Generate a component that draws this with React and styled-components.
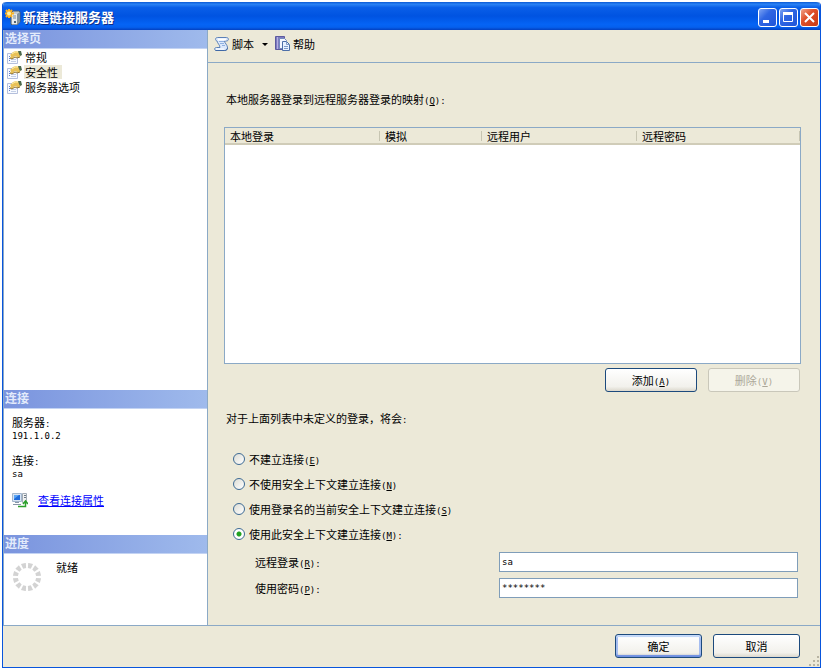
import React, { useState } from 'react';
import styled, { createGlobalStyle, ThemeProvider } from 'styled-components';

const theme = {
  face: '#ece9d8',
  line: '#8ba9c6',
  blue: '#0855dd',
  text: '#000000',
};

const pages = ['常规', '安全性', '服务器选项'];

const modes = [
  { id: 'none', label: '不建立连接', hotkey: 'E' },
  { id: 'nosec', label: '不使用安全上下文建立连接', hotkey: 'N' },
  { id: 'current', label: '使用登录名的当前安全上下文建立连接', hotkey: 'S' },
  { id: 'this', label: '使用此安全上下文建立连接', hotkey: 'M', tail: ':' },
];

function Hotkey({ letter, tail }) {
  return (
    <Latin>
      (<u>{letter}</u>){tail}
    </Latin>
  );
}

function ServerIcon() {
  return (
    <svg width='16' height='16' viewBox='0 0 16 16'>
      <path d='M6 4l2-2h6l1 1v10l-3 3H7l-1-1z' fill='#c4ccd2' stroke='#4d5f70' />
      <path d='M12 5l3-2v10l-3 3z' fill='#7f909e' />
      <path d='M7 5h5v10H7z' fill='#e6eaec' />
      <path d='M8 7h3M8 9h3' stroke='#7c8c9d' />
      <path d='M9 12h2v2H9z' fill='#4f6173' />
      <path d='M4 0v9M0 4.500h9M1 1l6 7M7 1L1 8' stroke='#ffb31f' strokeWidth='2' />
      <circle cx='4' cy='4.500' r='2' fill='#fff3a6' />
    </svg>
  );
}

function PageIcon() {
  return (
    <svg width='15' height='14' viewBox='0 0 15 14'>
      <path d='M.5 3.500h10v10H.5z' fill='#f7faff' stroke='#b4bfdc' />
      <path d='M2 6.500h1M2 8.500h1M2 10.500h1' stroke='#5f7dc9' />
      <path d='M4 9.500h5M4 11.500h5' stroke='#c4cfe6' />
      <path d='M3 5l3-3 3-1 3 1 2 2-1 3-3 0-2-1-3 3-2-1 1-2z' fill='#e8c157' />
      <path d='M5 4l3-2h3' stroke='#fff0a9' fill='none' />
      <path d='M3 8l2 1 3-2 2 1 3-1' stroke='#94742a' fill='none' />
      <path d='M11 1l3 0 1 4-2 1-1-2z' fill='#4c6a4d' />
    </svg>
  );
}

function ScriptIcon() {
  return (
    <svg width='16' height='16' viewBox='0 0 16 16'>
      <path
        d='M3.500 1.500h9c2.500 0 2.500 3.500 0 3.500h-2c0 2 3 4 3 6.500 0 2-1 3-3 3h-8c-2.500 0-2.500-3 0-3h3.500C6 9 3.500 7.500 3 5 1 4.500 1 1.500 3.500 1.500z'
        fill='#dbe8fb'
        stroke='#5b80b7'
      />
      <path d='M4 3.500h8' stroke='#ffffff' strokeWidth='2' />
      <path d='M5 5.500h5M6 7.500h4M8 9.500h3' stroke='#8fb0e0' fill='none' />
      <path d='M2 13h8' stroke='#ffffff' />
      <path d='M1.500 14.500h9c2 0 3-1 3-3' stroke='#3f68a6' fill='none' />
    </svg>
  );
}

function HelpIcon() {
  return (
    <svg width='16' height='16' viewBox='0 0 16 16'>
      <path d='M.5.500h9v13h-9z' fill='#7f7cc0' stroke='#5c5a9e' />
      <path d='M2.500 1v12' stroke='#b3b0e2' />
      <path d='M4.500 2.500h5l2 2v8h-7z' fill='#f3f7ff' stroke='#7389bd' />
      <path d='M7.500 5.500h4l3 3v6h-7z' fill='#e7f1ff' stroke='#4d6fa8' />
      <path d='M11.500 5.500v3h3M9 10.500h4M9 12.500h4' stroke='#7d9ac8' fill='none' />
    </svg>
  );
}

function ConnectionIcon() {
  return (
    <svg width='16' height='16' viewBox='0 0 16 16'>
      <path d='M10.500 1.500h4v9h-4z' fill='#f1f2f3' stroke='#a4adb6' />
      <path d='M12 3.500h2M12 5.500h2' stroke='#6c7883' />
      <path d='M.5 1.500h9v8h-9z' fill='#d7e4f4' stroke='#a3b6cc' />
      <path d='M2 3h6v5H2z' fill='#1f6cdb' />
      <path d='M2 3h5l-5 4z' fill='#5ba6f4' />
      <path d='M3 10.500h4M1 12.500h8' stroke='#8796a8' />
      <path d='M6 14.500h7.500V10M11 12l2.500-3 2.500 3' stroke='#2ca12c' fill='none' strokeWidth='1.500' />
    </svg>
  );
}

function Spinner() {
  const ticks = Array.from({ length: 12 }, (_, i) => i * 30);
  return (
    <svg width='28' height='28' viewBox='0 0 28 28'>
      {ticks.map((deg) => (
        <path key={deg} d='M11.500 0h5l-1 5h-3z' fill='#d3d3d3' transform={`rotate(${deg + 15} 14 14)`} />
      ))}
    </svg>
  );
}

function Grip() {
  return (
    <svg width='11' height='11' viewBox='0 0 11 11'>
      <path d='M8 0h2v2H8zM4 4h2v2H4zM8 4h2v2H8zM0 8h2v2H0zM4 8h2v2H4zM8 8h2v2H8z' fill='#b8b4a2' />
    </svg>
  );
}

function App() {
  const [page, setPage] = useState('安全性');
  const [mode, setMode] = useState('this');
  const [login, setLogin] = useState('sa');
  const [password, setPassword] = useState('********');

  return (
    <ThemeProvider theme={theme}>
      <GlobalStyle />
      <Window>
        <TitleBar>
          <ServerIcon />
          <Title>新建链接服务器</Title>
          <CaptionButton aria-label='最小化'>
            <svg width='17' height='17' viewBox='0 0 17 17'>
              <path d='M4 11h6v3H4z' fill='#fff' />
            </svg>
          </CaptionButton>
          <CaptionButton aria-label='最大化'>
            <svg width='17' height='17' viewBox='0 0 17 17'>
              <path d='M3.500 4.500h9v8h-9z' fill='none' stroke='#fff' />
              <path d='M3 3h10v3H3z' fill='#fff' />
            </svg>
          </CaptionButton>
          <CaptionButton $close aria-label='关闭'>
            <svg width='17' height='17' viewBox='0 0 17 17'>
              <path d='M4 4l9 9M13 4l-9 9' stroke='#fff' strokeWidth='2' />
            </svg>
          </CaptionButton>
        </TitleBar>

        <Body>
          <Sidebar>
            <SectionTitle>选择页</SectionTitle>
            <PageList>
              {pages.map((name) => (
                <PageRow key={name}>
                  <PageIcon />
                  <PageButton $active={name === page} onClick={() => setPage(name)}>
                    {name}
                  </PageButton>
                </PageRow>
              ))}
            </PageList>

            <SectionTitle>连接</SectionTitle>
            <Connection>
              <Info>
                <dt>
                  服务器<Latin>:</Latin>
                </dt>
                <dd>
                  <Latin>191.1.0.2</Latin>
                </dd>
              </Info>
              <Info>
                <dt>
                  连接<Latin>:</Latin>
                </dt>
                <dd>
                  <Latin>sa</Latin>
                </dd>
              </Info>
              <LinkRow>
                <ConnectionIcon />
                <a href='#properties'>查看连接属性</a>
              </LinkRow>
            </Connection>

            <SectionTitle>进度</SectionTitle>
            <Progress>
              <Spinner />
              <span>就绪</span>
            </Progress>
          </Sidebar>

          <Main>
            <Toolbar>
              <ToolButton>
                <ScriptIcon />
                脚本
                <Arrow />
              </ToolButton>
              <ToolButton>
                <HelpIcon />
                帮助
              </ToolButton>
            </Toolbar>

            <Content>
              <Caption id='mapping'>
                本地服务器登录到远程服务器登录的映射
                <Hotkey letter='Q' tail=':' />
              </Caption>
              <ListBox>
                <MappingTable aria-labelledby='mapping'>
                  <colgroup>
                    <Col $width={155} />
                    <Col $width={102} />
                    <Col $width={155} />
                    <col />
                  </colgroup>
                  <thead>
                    <tr>
                      <th>本地登录</th>
                      <th>模拟</th>
                      <th>远程用户</th>
                      <th>远程密码</th>
                    </tr>
                  </thead>
                  <tbody />
                </MappingTable>
              </ListBox>
              <ListActions>
                <Button $wide>
                  添加
                  <Hotkey letter='A' />
                </Button>
                <Button $wide disabled>
                  删除
                  <Hotkey letter='V' />
                </Button>
              </ListActions>

              <Modes>
                <legend>对于上面列表中未定义的登录，将会<Latin>:</Latin></legend>
                {modes.map((m) => (
                  <RadioLabel key={m.id}>
                    <Radio name='mode' checked={mode === m.id} onChange={() => setMode(m.id)} />
                    <span>
                      {m.label}
                      <Hotkey letter={m.hotkey} tail={m.tail} />
                    </span>
                  </RadioLabel>
                ))}
              </Modes>

              <Fields>
                <label htmlFor='login'>
                  远程登录
                  <Hotkey letter='R' tail=':' />
                </label>
                <TextBox id='login' value={login} onChange={(e) => setLogin(e.target.value)} />
                <label htmlFor='password'>
                  使用密码
                  <Hotkey letter='P' tail=':' />
                </label>
                <TextBox id='password' value={password} onChange={(e) => setPassword(e.target.value)} />
              </Fields>
            </Content>
          </Main>
        </Body>

        <Footer>
          <Button $primary>确定</Button>
          <Button>取消</Button>
          <GripCorner>
            <Grip />
          </GripCorner>
        </Footer>
      </Window>
    </ThemeProvider>
  );
}

export default App;

const GlobalStyle = createGlobalStyle`
  * {
    box-sizing: border-box;
  }

  body {
    margin: 0;
    background: #ffffff;
    font-family: 'Noto Sans CJK SC', sans-serif;
    font-size: 11px;
    line-height: 16px;
    color: ${({ theme }) => theme.text};
  }

  button, input {
    font: inherit;
    color: inherit;
    margin: 0;
  }

  svg {
    display: block;
    flex-shrink: 0;
  }
`;

const Latin = styled.span`
  font-family: 'DejaVu Sans Mono', monospace;
  font-size: 9px;
  line-height: 1;
`;

const Window = styled.div`
  display: flex;
  flex-direction: column;
  min-height: calc(100vh - 4px);
  margin: 2px;
  border: 1px solid ${({ theme }) => theme.blue};
  border-top: 0;
  border-radius: 4px 4px 0 0;
  background: ${({ theme }) => theme.face};
`;

const TitleBar = styled.header`
  display: flex;
  align-items: center;
  gap: 2px;
  height: 28px;
  padding: 2px 1px 0 2px;
  border-radius: 4px 4px 0 0;
  background: linear-gradient(
    #0a5ad6 0%,
    #2a82f4 8%,
    #0a5fe8 20%,
    #0053e1 50%,
    #0564f5 80%,
    #0560ee 90%,
    #0340c0 100%
  );
`;

const Title = styled.h1`
  flex: 1;
  margin: 0;
  font-size: 13px;
  font-weight: bold;
  color: #ffffff;
  text-shadow: 1px 1px 0 #0b2f8a;
`;

const CaptionButton = styled.button`
  display: flex;
  align-items: center;
  justify-content: center;
  width: 19px;
  height: 19px;
  padding: 0;
  border: 1px solid #ffffff;
  border-radius: 3px;
  background: ${({ $close }) =>
    $close
      ? 'linear-gradient(135deg, #f0a58c, #e0512b 40%, #c93a14)'
      : 'linear-gradient(135deg, #7ea4f3, #2f66e3 40%, #1f55d8)'};
`;

const Body = styled.div`
  display: flex;
  flex: 1;
  border-bottom: 1px solid ${({ theme }) => theme.line};
`;

const Sidebar = styled.aside`
  display: flex;
  flex-direction: column;
  width: 205px;
  flex-shrink: 0;
  border-left: 1px solid ${({ theme }) => theme.line};
  border-right: 1px solid ${({ theme }) => theme.line};
  background: #ffffff;
`;

const SectionTitle = styled.h2`
  height: 19px;
  margin: 0;
  padding: 0 1px;
  border-bottom: 1px solid #c3d3f3;
  background: linear-gradient(90deg, #7a94de, #9fbaec);
  font-size: 12px;
  line-height: 16px;
  font-weight: bold;
  color: #e3ebfb;
`;

const PageList = styled.ul`
  flex: 1;
  margin: 0;
  padding: 0 3px;
  list-style: none;
`;

const PageRow = styled.li`
  display: flex;
  align-items: center;
  gap: 2px;
  height: 15px;
`;

const PageButton = styled.button`
  height: 14px;
  padding: 0 4px 0 1px;
  border: 0;
  line-height: 12px;
  background: ${({ $active, theme }) => ($active ? theme.face : 'transparent')};
`;

const Connection = styled.div`
  padding: 7px 8px 27px;
`;

const Info = styled.dl`
  margin: 0 0 14px;
  line-height: 12px;

  dt {
    height: 12px;
  }

  dd {
    height: 12px;
    margin: 0;
  }
`;

const LinkRow = styled.div`
  display: flex;
  align-items: center;
  gap: 10px;

  a {
    color: #0000ff;
  }
`;

const Progress = styled.div`
  display: flex;
  gap: 15px;
  height: 71px;
  padding: 5px 9px;

  svg {
    margin-top: 4px;
  }
`;

const Main = styled.main`
  display: flex;
  flex-direction: column;
  flex: 1;
`;

const Toolbar = styled.div`
  display: flex;
  align-items: center;
  gap: 7px;
  height: 33px;
  padding: 0 6px 4px;
  border-bottom: 1px solid ${({ theme }) => theme.line};
`;

const ToolButton = styled.button`
  display: flex;
  align-items: center;
  gap: 2px;
  padding: 0;
  border: 0;
  background: transparent;
`;

const Arrow = styled.span`
  margin-left: 6px;
  border: 3px solid transparent;
  border-top-color: #000000;
  border-bottom: 0;
`;

const Content = styled.div`
  display: flex;
  flex-direction: column;
  flex: 1;
  padding: 28px 19px 27px 16px;
`;

const Caption = styled.p`
  margin: 0 0 20px;
  padding-left: 2px;
`;

const ListBox = styled.div`
  flex: 1;
  border: 1px solid ${({ theme }) => theme.line};
  background: #ffffff;
`;

const MappingTable = styled.table`
  width: 100%;
  border-collapse: collapse;
  table-layout: fixed;

  th {
    height: 16px;
    padding: 0 5px;
    border-bottom: 2px solid #d0ccb8;
    background: linear-gradient(#c7c5b2, #c7c5b2) right center / 1px 10px no-repeat
      ${({ theme }) => theme.face};
    font-weight: normal;
    line-height: 14px;
    text-align: left;
  }
`;

const Col = styled.col`
  width: ${({ $width }) => $width}px;
`;

const ListActions = styled.div`
  display: flex;
  justify-content: flex-end;
  gap: 11px;
  margin-top: 4px;
  padding-right: 1px;
`;

const Button = styled.button`
  width: ${({ $wide }) => ($wide ? 92 : 87)}px;
  height: 24px;
  padding: 0;
  border: 1px solid #1c4a7d;
  border-radius: 3px;
  background: linear-gradient(#ffffff, #f2f1ec 80%, #dcd8cd);
  box-shadow: ${({ $primary }) =>
    $primary ? 'inset 0 2px 1px #c6daf9, inset 0 -2px 1px #6f8fe0, inset 0 0 0 2px #a5bdf0' : 'none'};

  &:disabled {
    border-color: #c9c7ba;
    background: #f5f4ea;
    color: #aca899;
  }
`;

const Modes = styled.fieldset`
  display: flex;
  flex-direction: column;
  gap: 9px;
  margin: 18px 0 10px;
  padding: 0 0 0 9px;
  border: 0;

  legend {
    margin: 0 0 25px -9px;
    padding: 0 2px;
  }
`;

const RadioLabel = styled.label`
  display: flex;
  align-items: center;
  gap: 4px;
`;

const Radio = styled.input.attrs({ type: 'radio' })`
  appearance: none;
  width: 12px;
  height: 12px;
  border: 1px solid #3d6a94;
  border-radius: 50%;
  background: linear-gradient(135deg, #dcdcd4, #ffffff);

  &:checked {
    background: radial-gradient(circle, #21a121 0 2px, #ffffff 3px);
  }
`;

const Fields = styled.div`
  display: grid;
  grid-template-columns: 245px 1fr;
  align-items: center;
  row-gap: 6px;
  padding: 0 3px 0 30px;

  label {
    padding-left: 1px;
  }
`;

const TextBox = styled.input.attrs({ type: 'text' })`
  width: 100%;
  height: 20px;
  padding: 0 2px;
  border: 1px solid #7f9db9;
  background: #ffffff;
  font-family: 'DejaVu Sans Mono', monospace;
  font-size: 9px;
`;

const Footer = styled.footer`
  position: relative;
  display: flex;
  justify-content: flex-end;
  gap: 11px;
  padding: 8px 20px 9px;
`;

const GripCorner = styled.span`
  position: absolute;
  right: 0;
  bottom: 0;
`;
